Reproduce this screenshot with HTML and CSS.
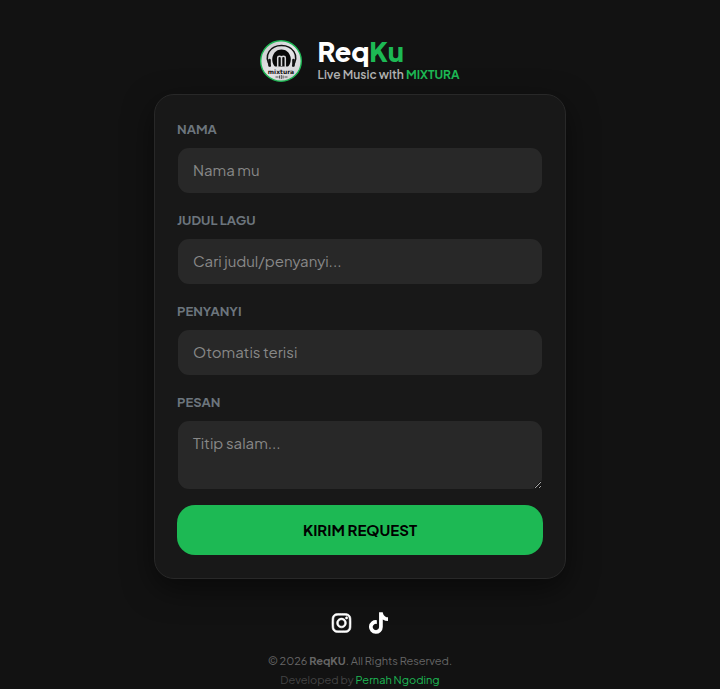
FILE: index.html
```html
<!DOCTYPE html>
<html lang="id">
  <head>
    <meta charset="UTF-8" />
    <meta name="viewport" content="width=device-width, initial-scale=1.0" />
    <title>ReqKu - Live Music Request</title>
    <link rel="stylesheet" href="styles.css">
  </head>
  <body>
    <header class="brand">
      <svg class="brand-logo" viewBox="0 0 42 42" aria-hidden="true">
        <defs>
          <linearGradient id="disc" x1="0" y1="0" x2="1" y2="1">
            <stop offset="0" stop-color="#c4c4c6" />
            <stop offset="0.5" stop-color="#e6e6e8" />
            <stop offset="1" stop-color="#cecdd0" />
          </linearGradient>
        </defs>
        <circle cx="21" cy="21" r="20.300" fill="url(#disc)" stroke="#1db954" stroke-width="1.400" />
        <!-- headphones -->
        <path d="M10.500 26.500C2.500 15 11 5.500 21.500 5.500S40.500 15 32.500 26.500" fill="none" stroke="#111" stroke-width="1.500" />
        <path d="M9.500 20v5.500M33.500 20v5.500" stroke="#111" stroke-width="2.600" stroke-linecap="round" />
        <path d="M15 26.500C9.500 21 12.500 9.500 21.500 9.500S33.500 21 28 26.500z" fill="#080808" />
        <path d="M17.700 28V18q0-1.700 1.900-1.700T21.500 18v8M21.500 18q0-1.700 1.900-1.700T25.300 18v10" fill="none" stroke="#d6d6d8" stroke-width="1.500" />
        <text class="logo-text" x="21" y="33.500" text-anchor="middle">mixtura</text>
        <path d="M15.500 37h3M19.500 35.500v3M21.300 35v4M23.100 35.500v3M24.500 37h3" stroke="#444" stroke-width="0.900" />
      </svg>
      <div>
        <h1 class="brand-name">Req<span>Ku</span></h1>
        <p class="brand-tagline">Live Music with <span>MIXTURA</span></p>
      </div>
    </header>

    <main class="card">
      <form>
        <div class="field">
          <label for="nama">NAMA</label>
          <input type="text" id="nama" placeholder="Nama mu" />
        </div>
        <div class="field">
          <label for="judul">JUDUL LAGU</label>
          <input type="text" id="judul" placeholder="Cari judul/penyanyi..." autocomplete="off" />
        </div>
        <div class="field">
          <label for="penyanyi">PENYANYI</label>
          <input type="text" id="penyanyi" placeholder="Otomatis terisi" />
        </div>
        <div class="field">
          <label for="pesan">PESAN</label>
          <textarea id="pesan" placeholder="Titip salam..."></textarea>
        </div>
        <button type="submit" class="btn-send">KIRIM REQUEST</button>
      </form>
    </main>

    <footer class="footer">
      <div class="socials">
        <a href="#" aria-label="Instagram">
          <svg class="icon-instagram" viewBox="0 0 448 512" width="19" height="22" fill="currentColor">
            <path d="M224.100 141c-63.600 0-114.900 51.300-114.900 114.900s51.300 114.900 114.900 114.900S339 319.500 339 255.900 287.700 141 224.100 141zm0 189.600c-41.100 0-74.700-33.500-74.700-74.700s33.500-74.700 74.700-74.700 74.700 33.500 74.700 74.700-33.600 74.700-74.700 74.700zm146.400-194.300c0 14.900-12 26.800-26.800 26.800-14.900 0-26.800-12-26.800-26.800s12-26.800 26.800-26.800 26.800 12 26.800 26.800zm76.100 27.200c-1.700-35.900-9.900-67.700-36.200-93.900-26.200-26.200-58-34.400-93.900-36.200-37-2.100-147.900-2.100-184.900 0-35.800 1.700-67.600 9.900-93.900 36.100s-34.400 58-36.200 93.900c-2.100 37-2.100 147.900 0 184.900 1.700 35.900 9.900 67.700 36.200 93.900s58 34.400 93.900 36.200c37 2.100 147.900 2.100 184.900 0 35.900-1.700 67.700-9.900 93.900-36.200 26.200-26.200 34.400-58 36.200-93.900 2.100-37 2.100-147.800 0-184.800zM398.800 388c-7.800 19.600-22.900 34.700-42.600 42.600-29.500 11.700-99.500 9-132.100 9s-102.700 2.600-132.100-9c-19.600-7.800-34.700-22.900-42.600-42.600-11.700-29.500-9-99.500-9-132.100s-2.600-102.700 9-132.100c7.800-19.600 22.900-34.700 42.600-42.600 29.500-11.700 99.500-9 132.100-9s102.700-2.600 132.100 9c19.600 7.800 34.700 22.900 42.600 42.600 11.700 29.500 9 99.500 9 132.100s2.700 102.700-9 132.100z" />
          </svg>
        </a>
        <a href="#" aria-label="TikTok">
          <svg viewBox="0 0 448 512" width="19" height="22" fill="currentColor">
            <path d="M448 209.900a210.100 210.100 0 0 1-122.800-39.300v178.800A162.600 162.600 0 1 1 185 188.300v89.900a74.600 74.600 0 1 0 52.200 71.200V0h88a121.200 121.200 0 0 0 1.900 22.200 122.200 122.200 0 0 0 53.900 80.200 121.400 121.400 0 0 0 67 20.100z" />
          </svg>
        </a>
      </div>
      <p class="copyright">&copy; 2026 <strong>ReqKU</strong>. All Rights Reserved.</p>
      <p class="credit">Developed by <a href="#">Pernah Ngoding</a></p>
    </footer>
  </body>
</html>
```
FILE: styles.css
```css
* {
  margin: 0;
  padding: 0;
  box-sizing: border-box;
}

body {
  font-family: "Plus Jakarta Sans", Inter, sans-serif;
  background-color: #121212;
  color: #fff;
  display: flex;
  flex-direction: column;
  align-items: center;
  min-height: 100vh;
  padding: 36px 16px 0;
}

a {
  text-decoration: none;
}

.brand {
  display: flex;
  align-items: center;
  gap: 15px;
  margin-bottom: 8px;
}

.brand-logo {
  width: 42px;
  height: 42px;
}

.logo-text {
  font-family: "DejaVu Sans", sans-serif;
  font-size: 6px;
  font-weight: 700;
  fill: #111;
}

.brand-name {
  font-size: 27px;
  font-weight: 800;
  line-height: 30px;
}

.brand-name span,
.brand-tagline span {
  color: #1db954;
}

.brand-tagline {
  margin-bottom: 2px;
  font-size: 12px;
  font-weight: 600;
  line-height: 18px;
  color: #b3b3b3;
}

.brand-tagline span {
  font-weight: 700;
}

.card {
  width: 100%;
  max-width: 412px;
  padding: 23px 22px;
  background-color: #181818;
  border: 1px solid #282828;
  border-radius: 20px;
  box-shadow: 0 10px 30px rgba(0, 0, 0, 0.5);
}

.field {
  margin-bottom: 15px;
}

.field label {
  display: block;
  margin-bottom: 6px;
  font-size: 13px;
  font-weight: 700;
  line-height: 23px;
  color: #6c757d;
}

.field input,
.field textarea {
  display: block;
  width: 100%;
  height: 47px;
  padding: 9px 15px 11px;
  font-family: inherit;
  font-size: 15px;
  line-height: 24px;
  color: #fff;
  background-color: #282828;
  background-clip: padding-box;
  border: 1px solid transparent;
  border-radius: 12px;
  outline: none;
}

.field textarea {
  height: 70px;
  padding: 10px 15px;
  resize: vertical;
}

.field input:focus,
.field textarea:focus {
  border-color: #1db954;
}

.field input::placeholder,
.field textarea::placeholder {
  color: #888;
}

.btn-send {
  display: block;
  width: 100%;
  height: 50px;
  padding-bottom: 2px;
  font-family: inherit;
  font-size: 15px;
  font-weight: 700;
  color: #000;
  background-color: #1db954;
  border: none;
  border-radius: 18px;
  cursor: pointer;
}

.btn-send:hover {
  background-color: #1ed760;
}

.footer {
  margin-top: 33px;
  text-align: center;
  font-size: 11px;
  line-height: 19px;
}

.socials {
  display: flex;
  justify-content: center;
  gap: 18px;
  margin-bottom: 17px;
}

.socials a {
  display: flex;
  color: #fff;
}

.icon-instagram {
  stroke: currentColor;
  stroke-width: 14;
  overflow: visible;
}

.copyright {
  color: #666;
}

.credit {
  color: #444;
}

.credit a {
  color: #1db954;
}
```
